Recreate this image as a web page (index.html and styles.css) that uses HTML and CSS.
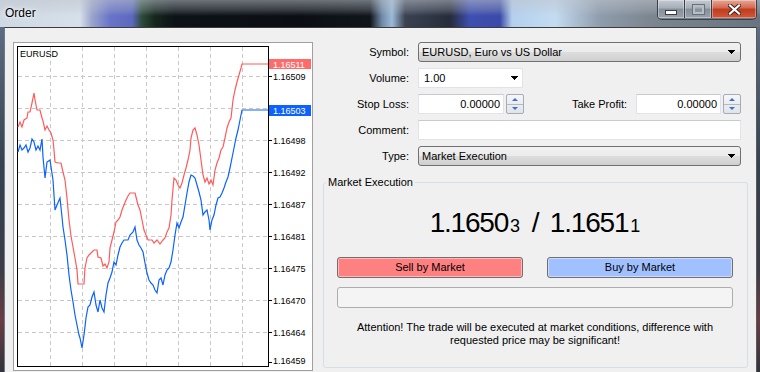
FILE: index.html
```html
<!DOCTYPE html>
<html>
<head>
<meta charset="utf-8">
<title>Order</title>
<link rel="stylesheet" href="styles.css">
</head>
<body>
<div class="window">
  <div class="titlebar">
    <span class="title">Order</span>
    <div class="caption">
      <div class="cbtn min"><span class="glyph-min"></span></div>
      <div class="cbtn max"><span class="glyph-max"></span></div>
      <div class="cbtn close">
        <svg width="13" height="11" viewBox="0 0 13 11"><path d="M2 1.5L11 9.5M11 1.5L2 9.5" stroke="#3a2420" stroke-width="4" stroke-linecap="square"/><path d="M2 1.5L11 9.5M11 1.5L2 9.5" stroke="#fff" stroke-width="2.2" stroke-linecap="square"/></svg>
      </div>
    </div>
  </div>
  <div class="frame">
    <div class="client">
      <div class="chart-box">
        <svg class="chart" width="298" height="327" viewBox="14 43 298 327">
          <g fill="none" stroke="#c8c8c8" stroke-dasharray="4 3" shape-rendering="crispEdges">
            <path d="M50.5 47V366M82.5 47V366M114.5 47V366M146.5 47V366M178.5 47V366M210.5 47V366M242.5 47V366"/>
            <path d="M18 76.5H268M18 108.5H268M18 140.5H268M18 172.5H268M18 204.5H268M18 236.5H268M18 268.5H268M18 300.5H268M18 332.5H268"/>
          </g>
          <rect x="17.5" y="46.5" width="251" height="320" fill="none" stroke="#000" shape-rendering="crispEdges"/>
          <path d="M269 64.5h3M269 76.5h3M269 110.5h3M269 140.5h3M269 172.5h3M269 204.5h3M269 236.5h3M269 268.5h3M269 300.5h3M269 332.5h3M269 362.5h3" stroke="#000" shape-rendering="crispEdges"/>
          <polyline fill="none" stroke="#ff5b5b" stroke-width="1.2" points="18,127 20,122 22,127 24,120 27,118 28,112 30,112 32,103 34,93 35,100 37,110 40,110 42,118 43,121 45,130 47,126 49,130 51,133 53,140 54,150 55,162 58,163 61,163 63,172 65,180 67,198 69,220 71,236 73,247 75,258 77,270 78,284 84,284 85,268 87,258 89,255 91,253 94,250 97,250 98,257 101,258 103,266 105,264 107,268 109,262 110,248 112,240 114,232 116,222 118,220 120,217 122,210 124,205 126,200 128,196 130,193 135,193 136,197 138,205 140,210 142,220 144,230 146,235 148,240 152,240 154,243 157,240 160,244 163,240 165,238 167,232 169,228 171,215 172,200 174,178 176,180 178,185 180,188 182,183 184,175 186,168 188,160 190,150 191,138 193,130 195,128 197,135 199,145 201,160 203,175 205,182 207,178 209,184 211,180 213,185 215,170 217,163 219,158 221,150 223,147 225,138 227,128 229,122 231,118 233,100 235,90 237,82 239,75 241,68 242,64 268,64"/>
          <polyline fill="none" stroke="#0b62ff" stroke-width="1.2" points="18,152 20,145 22,150 24,148 26,145 28,152 30,148 32,139 34,142 36,150 38,146 40,150 42,139 43,157 45,178 47,162 50,160 53,180 55,210 57,205 60,198 62,217 63,227 65,240 67,255 69,275 71,290 73,302 75,315 77,325 79,335 80,338 82,348 84,335 86,318 88,307 90,305 92,297 94,292 96,305 98,312 100,300 102,308 104,312 106,295 108,283 110,278 112,272 114,262 116,265 118,255 120,247 122,243 124,240 128,240 130,235 133,232 135,227 137,240 139,245 141,248 143,252 145,263 147,273 149,280 151,283 153,285 155,290 157,293 159,280 161,278 163,285 165,275 167,270 169,268 171,262 173,250 175,235 177,223 179,228 181,222 183,217 185,205 187,193 189,182 191,175 193,176 195,178 197,185 199,192 201,200 203,215 205,212 207,210 209,220 210,230 212,220 214,215 216,205 218,198 220,197 222,193 224,188 226,182 228,177 230,168 232,158 234,148 236,138 238,130 240,120 242,110 268,110"/>
          <g class="axis">
            <text x="20" y="56.5">EURUSD</text>
            <text x="273" y="80">1.16509</text>
            <text x="273" y="144">1.16498</text>
            <text x="273" y="176">1.16492</text>
            <text x="273" y="208">1.16487</text>
            <text x="273" y="240">1.16481</text>
            <text x="273" y="272">1.16475</text>
            <text x="273" y="304">1.16470</text>
            <text x="273" y="336">1.16464</text>
            <text x="273" y="364">1.16459</text>
          </g>
          <rect x="269" y="59" width="42" height="10" fill="#ff6b6b"/>
          <text class="axis-tag" x="273" y="67.5">1.16511</text>
          <rect x="269" y="105" width="42" height="11" fill="#0b62ff"/>
          <text class="axis-tag" x="273" y="114">1.16503</text>
        </svg>
      </div>
      <div class="order-panel">
        <div class="fields">
          <span class="lbl">Symbol:</span>
          <div class="combo">EURUSD, Euro vs US Dollar<svg class="arr" width="7" height="4" viewBox="0 0 7 4"><polygon points="0,0 7,0 3.5,4" fill="#000"/></svg></div>
          <span class="lbl">Volume:</span>
          <div class="volume">1.00<svg class="arr" width="7" height="4" viewBox="0 0 7 4"><polygon points="0,0 7,0 3.5,4" fill="#000"/></svg></div>
          <span class="lbl">Stop Loss:</span>
          <div class="sl-row">
            <div class="num">0.00000</div>
            <div class="spin"><span class="up"></span><span class="down"></span></div>
            <span class="tp-lbl">Take Profit:</span>
            <div class="num tp">0.00000</div>
            <div class="spin"><span class="up"></span><span class="down"></span></div>
          </div>
          <span class="lbl">Comment:</span>
          <div class="text-input"></div>
          <span class="lbl">Type:</span>
          <div class="combo">Market Execution<svg class="arr" width="7" height="4" viewBox="0 0 7 4"><polygon points="0,0 7,0 3.5,4" fill="#000"/></svg></div>
        </div>
        <fieldset class="group">
          <legend>Market Execution</legend>
          <div class="group-body">
            <div class="quote">1.1650<small>3</small> / 1.1651<small>1</small></div>
            <div class="trade-buttons">
              <div class="tbtn sell">Sell by Market</div>
              <div class="tbtn buy">Buy by Market</div>
            </div>
            <div class="status"></div>
            <p class="warning">Attention! The trade will be executed at market conditions, difference with<br>requested price may be significant!</p>
          </div>
        </fieldset>
      </div>
    </div>
  </div>
</div>
</body>
</html>
```

FILE: styles.css
```css
html, body {
  margin: 0;
  padding: 0;
}
body {
  width: 760px;
  height: 372px;
  overflow: hidden;
  font-family: "Liberation Sans", Arial, sans-serif;
  font-size: 11px;
  color: #000;
}
.window {
  width: 760px;
  height: 372px;
  display: flex;
  flex-direction: column;
}
.titlebar {
  flex: none;
  height: 27px;
  display: flex;
  justify-content: space-between;
  align-items: flex-start;
  background:
    linear-gradient(180deg, rgba(190,196,204,0.55) 0px, rgba(190,196,204,0.25) 10px, rgba(190,196,204,0) 16px),
    linear-gradient(90deg, #cfd9e5 0px, #d6e0ea 80px, #9aa4cc 92px, #6874c8 110px, #5d69c0 132px, #2c4a3a 142px, #16261e 155px, #0d1218 175px, #0b0f15 300px, #10151c 370px, #6f8aa8 382px, #9cbad8 392px, #3a4252 405px, #262c3a 450px, #3f4fb0 470px, #3a4aa8 500px, #b4d0ee 512px, #c4dcf2 555px, #8e9cac 600px, #7c8690 650px, #6a7480 760px);
}
.title {
  padding-left: 5px;
  line-height: 27px;
  font-size: 12px;
  color: #000;
  text-shadow: 0 0 6px rgba(255,255,255,0.9), 0 0 3px rgba(255,255,255,0.9);
}
.caption {
  display: flex;
  margin-right: 3px;
  height: 19px;
  border: 1px solid #3b3f46;
  border-top: none;
  border-radius: 0 0 5px 5px;
  overflow: hidden;
}
.cbtn {
  height: 18px;
  display: flex;
  align-items: center;
  justify-content: center;
  box-shadow: inset 0 0 0 1px rgba(255,255,255,0.35);
}
.min, .max {
  width: 26px;
  border-right: 1px solid #3b3f46;
  background: linear-gradient(180deg, #c4cad2 0%, #a5adb8 45%, #868e9a 50%, #9aa2ae 100%);
}
.close {
  width: 44px;
  background: linear-gradient(180deg, #e6a898 0%, #d2674f 45%, #c13a1c 50%, #d0583a 100%);
}
.glyph-min {
  width: 10px;
  height: 3px;
  margin-top: 6px;
  background: #fff;
  border: 1px solid #3a3e44;
}
.glyph-max {
  width: 7px;
  height: 5px;
  border: 2px solid #b8bec6;
  outline: 1px solid #6a7078;
}
.frame {
  flex: 1;
  display: flex;
  padding: 0 3px 0 4px;
  background: linear-gradient(180deg, #5c6d84 0%, #34424f 40%, #3a3c48 70%, #6a3c44 85%, #30343c 100%);
  min-height: 0;
}
.client {
  flex: 1;
  display: flex;
  gap: 10px;
  padding: 14px 0 0 8px;
  background: #f0f0f0;
  border-top: 1px solid #3c3c3c;
  border-left: 1px solid #707888;
  border-right: 1px solid #5a5a5a;
  overflow: hidden;
}
.chart-box {
  flex: none;
  width: 298px;
  height: 327px;
  border: 1px solid #a0a0a0;
  background: #fff;
}
.chart {
  display: block;
}
.axis text {
  font-family: "Liberation Sans", Arial, sans-serif;
  font-size: 9px;
  fill: #000;
}
.axis-tag {
  font-family: "Liberation Sans", Arial, sans-serif;
  font-size: 9px;
  fill: #fff;
}
.order-panel {
  flex: none;
  width: 425px;
  display: flex;
  flex-direction: column;
}
.fields {
  display: grid;
  grid-template-columns: 86px 323px;
  grid-auto-rows: 20px;
  column-gap: 9px;
  row-gap: 6px;
}
.lbl {
  text-align: right;
  line-height: 20px;
}
.combo {
  box-sizing: border-box;
  height: 20px;
  border: 1px solid #707070;
  border-radius: 3px;
  background: linear-gradient(180deg, #f2f2f2 0%, #ebebeb 48%, #dddddd 52%, #cfcfcf 100%);
  display: flex;
  align-items: center;
  justify-content: space-between;
  padding: 0 5px 0 3px;
}
.arr {
  display: block;
  shape-rendering: crispEdges;
}
.volume {
  box-sizing: border-box;
  width: 105px;
  height: 20px;
  border: 1px solid #e2e3ea;
  background: #fff;
  display: flex;
  align-items: center;
  justify-content: space-between;
  padding: 0 4px 0 5px;
}
.sl-row {
  display: flex;
  align-items: stretch;
}
.num {
  box-sizing: border-box;
  width: 86px;
  height: 20px;
  border: 1px solid #e2e3ea;
  border-top-color: #c8cad0;
  background: #fff;
  text-align: right;
  line-height: 18px;
  padding-right: 3px;
}
.num.tp {
  width: 85px;
}
.spin {
  box-sizing: border-box;
  width: 18px;
  height: 20px;
  margin-left: 2px;
  border: 1px solid #a6abb4;
  border-radius: 2px;
  display: flex;
  flex-direction: column;
  background: linear-gradient(180deg, #f4f6fa, #dfe4ec);
}
.spin span {
  flex: 1;
  display: flex;
  align-items: center;
  justify-content: center;
}
.spin .up {
  border-bottom: 1px solid #b4b9c2;
}
.spin .up::before {
  content: "";
  border-left: 3px solid transparent;
  border-right: 3px solid transparent;
  border-bottom: 3px solid #4a6cb4;
}
.spin .down::before {
  content: "";
  border-left: 3px solid transparent;
  border-right: 3px solid transparent;
  border-top: 3px solid #4a6cb4;
}
.tp-lbl {
  flex: 1;
  text-align: right;
  padding-right: 9px;
  line-height: 20px;
}
.text-input {
  box-sizing: border-box;
  height: 20px;
  border: 1px solid #e2e3ea;
  border-top-color: #c8cad0;
  background: #fff;
}
.group {
  margin: 10px 0 0 0;
  padding: 0;
  border: 1px solid #d5dfe5;
  border-radius: 3px;
  min-width: 0;
}
.group legend {
  padding: 0 2px;
  margin-left: 2px;
  line-height: 13px;
  font-size: 11px;
}
.group-body {
  padding: 0 14px 20px 13px;
}
.quote {
  margin-top: 17px;
  height: 34px;
  line-height: 34px;
  text-align: center;
  font-size: 28px;
  letter-spacing: -1.2px;
  word-spacing: 5px;
  color: #000;
}
.quote small {
  font-size: 18px;
  letter-spacing: 0;
  margin-left: 2px;
}
.trade-buttons {
  margin-top: 17px;
  display: flex;
  gap: 24px;
}
.tbtn {
  box-sizing: border-box;
  width: 186px;
  height: 21px;
  border: 1px solid #6f6f6f;
  border-radius: 3px;
  box-shadow: inset 0 0 0 1px rgba(255,255,255,0.45);
  text-align: center;
  line-height: 19px;
}
.sell {
  background: #ff8080;
}
.buy {
  background: #a0c0ff;
}
.status {
  margin-top: 9px;
  box-sizing: border-box;
  height: 21px;
  border: 1px solid #adadad;
  border-radius: 3px;
  background: #f4f4f4;
}
.warning {
  margin: 13px 0 0 0;
  text-align: center;
  line-height: 13px;
}
```
